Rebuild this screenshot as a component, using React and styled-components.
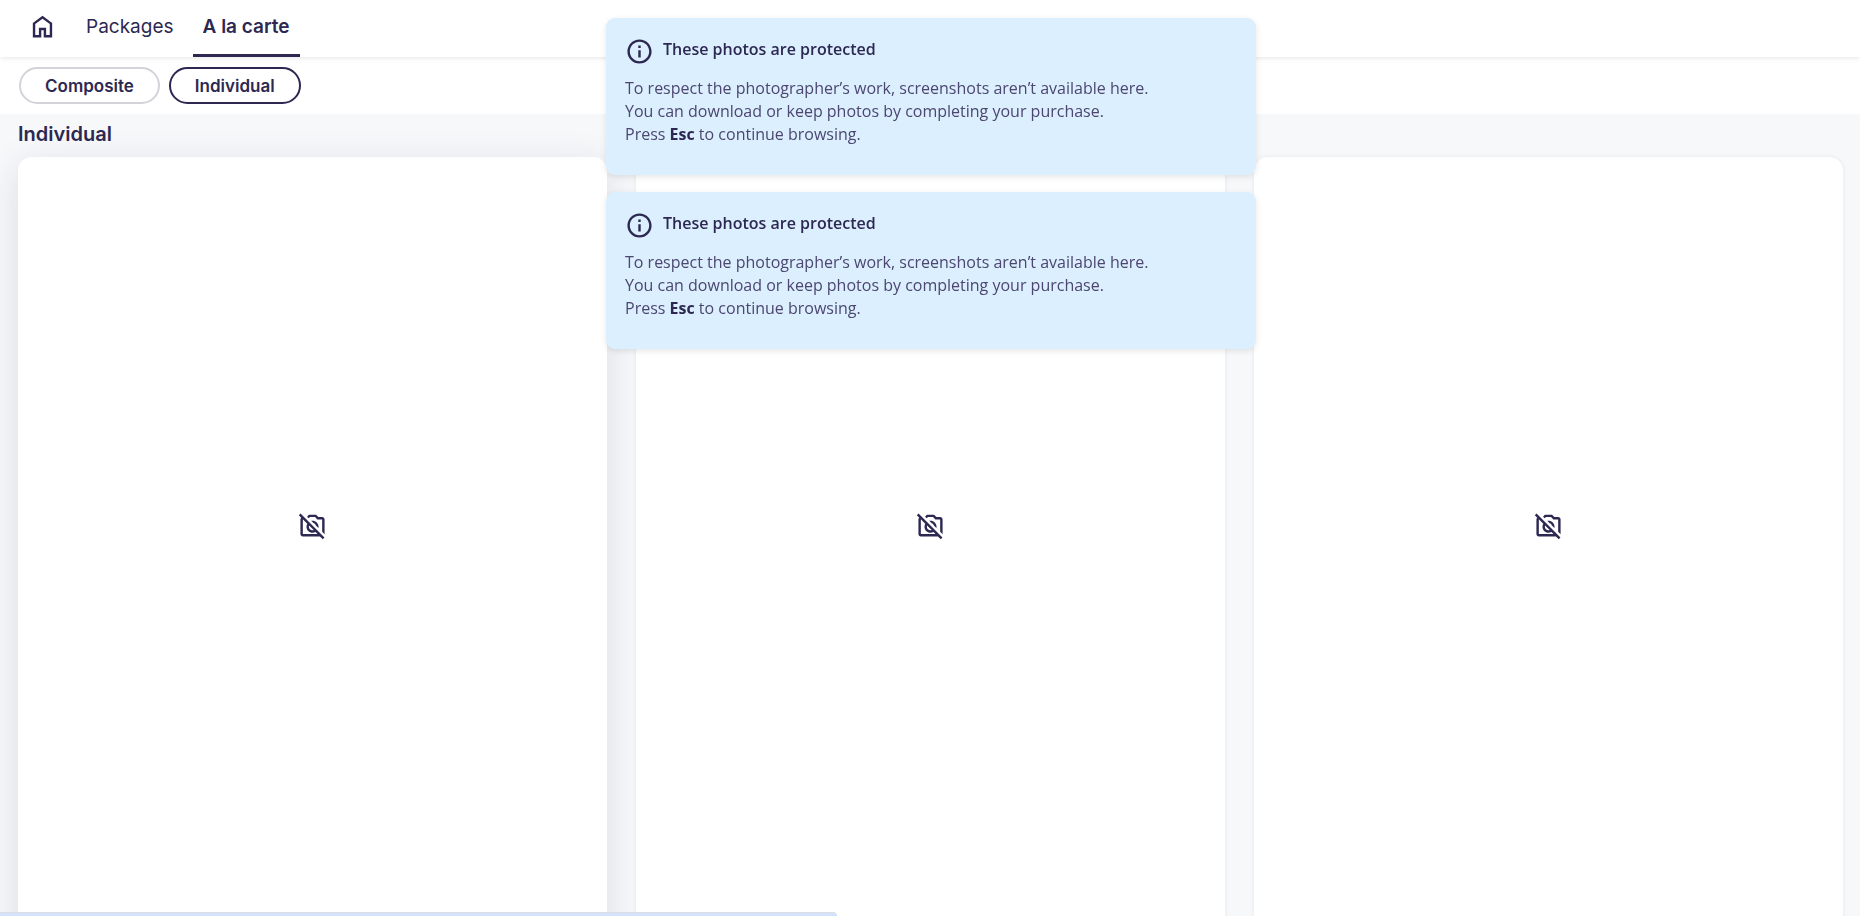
import React from "react";
import styled, { createGlobalStyle } from "styled-components";
import { MdInfoOutline, MdOutlineNoPhotography } from "react-icons/md";

const notices = [1, 2];
const photos = [
  { id: 1, raised: true },
  { id: 2, raised: false },
  { id: 3, raised: false },
];

const HomeIcon = () => (
  <svg width="29" height="29" viewBox="0 0 24 24" fill="currentColor" aria-hidden="true">
    <path d="M6 19h3v-6h6v6h3v-9l-6-4.5L6 10v9Zm-2 2V9l8-6 8 6v12h-7v-6h-2v6H4Z" />
  </svg>
);

const Notice = () => (
  <NoticeBox role="status">
    <NoticeTitle>
      <MdInfoOutline />
      <strong>These photos are protected</strong>
    </NoticeTitle>
    <NoticeText>
      To respect the photographer’s work, screenshots aren’t available here.
      <br />
      You can download or keep photos by completing your purchase.
      <br />
      Press <b>Esc</b> to continue browsing.
    </NoticeText>
  </NoticeBox>
);

const App = () => {
  return (
    <Page>
      <GlobalStyle />
      <Header>
        <HomeLink href="#home" aria-label="Home">
          <HomeIcon />
        </HomeLink>
        <Tab href="#packages">Packages</Tab>
        <Tab href="#a-la-carte" $active>
          A la carte
        </Tab>
      </Header>
      <Filters>
        <Chip type="button">Composite</Chip>
        <Chip type="button" $active>
          Individual
        </Chip>
      </Filters>
      <Main>
        <Heading>Individual</Heading>
        <Grid>
          {photos.map((photo) => (
            <Card key={photo.id} $raised={photo.raised}>
              <Preview>
                <MdOutlineNoPhotography />
              </Preview>
            </Card>
          ))}
        </Grid>
      </Main>
      <Notices>
        {notices.map((id) => (
          <Notice key={id} />
        ))}
      </Notices>
      <StatusBar />
    </Page>
  );
};

export default App;

const GlobalStyle = createGlobalStyle`
  * {
    box-sizing: border-box;
  }
  html {
    scrollbar-width: none;
  }
  body {
    margin: 0;
    background: #f6f8fa;
    color: #2d2852;
    font-family: Inter, "Liberation Sans", sans-serif;
  }
`;

const Page = styled.div`
  min-height: 100vh;
`;

const Header = styled.header`
  position: relative;
  display: flex;
  height: 57px;
  padding-left: 18px;
  background: #fff;
  box-shadow: 0 1px 5px rgba(0, 0, 0, 0.1);
`;

const HomeLink = styled.a`
  display: flex;
  align-items: center;
  padding: 0 19px 4px 10px;
  color: inherit;
`;

const Tab = styled.a`
  padding: 15px 10px 0;
  border-bottom: 3px solid ${(props) => (props.$active ? "#2d2852" : "transparent")};
  color: inherit;
  font-size: 19px;
  font-weight: ${(props) => (props.$active ? 600 : 400)};
  line-height: 24px;
  text-decoration: none;

  & + & {
    margin-left: 9px;
  }
`;

const Filters = styled.div`
  display: flex;
  gap: 9px;
  padding: 10px 19px;
  background: #fff;
`;

const Chip = styled.button`
  height: 37px;
  padding: 0 24px;
  border: 2px solid ${(props) => (props.$active ? "#2d2852" : "#d4d3da")};
  border-radius: 19px;
  background: #fff;
  color: inherit;
  font-family: inherit;
  font-size: 17px;
  font-weight: 600;
`;

const Main = styled.main`
  padding: 8px 17px 24px 18px;
`;

const Heading = styled.h1`
  margin: 0 0 11px;
  font-size: 20px;
  font-weight: 600;
  line-height: 24px;
`;

const Grid = styled.div`
  display: grid;
  grid-template-columns: repeat(3, 1fr);
  gap: 29px;
`;

const Card = styled.article`
  padding-bottom: 96px;
  border-radius: 14px;
  background: #fff;
  box-shadow: ${(props) =>
    props.$raised
      ? "0 8px 36px rgba(43, 35, 80, 0.13)"
      : "0 0 5px rgba(43, 35, 80, 0.07)"};
`;

const Preview = styled.div`
  display: flex;
  align-items: center;
  justify-content: center;
  aspect-ratio: 4 / 5;

  svg {
    width: 29px;
    height: 29px;
  }
`;

const Notices = styled.div`
  position: fixed;
  top: 18px;
  left: 2px;
  right: 0;
  display: flex;
  flex-direction: column;
  align-items: center;
  gap: 17px;
  pointer-events: none;
`;

const NoticeBox = styled.div`
  width: 100%;
  max-width: 650px;
  padding: 19px 19px 29px;
  border-radius: 9px;
  background: #dbeffe;
  box-shadow: 0 2px 6px rgba(0, 0, 0, 0.1);
  font-family: "Open Sans", "Noto Sans", sans-serif;
`;

const NoticeTitle = styled.div`
  display: flex;
  gap: 9px;
  height: 29px;
  font-size: 16px;
  line-height: 24px;

  svg {
    width: 29px;
    height: 29px;
  }
  strong {
    font-weight: 600;
  }
`;

const NoticeText = styled.p`
  margin: 11px 0 0;
  color: #4c4670;
  font-size: 16px;
  line-height: 23px;

  b {
    color: #2d2852;
    font-weight: 700;
  }
`;

/* link preview strip along the bottom edge */
const StatusBar = styled.div`
  position: fixed;
  left: 0;
  bottom: 0;
  width: 45%;
  height: 4px;
  border-top: 1px solid #dcdde0;
  border-top-right-radius: 4px;
  background: #d3e3fd;
`;
